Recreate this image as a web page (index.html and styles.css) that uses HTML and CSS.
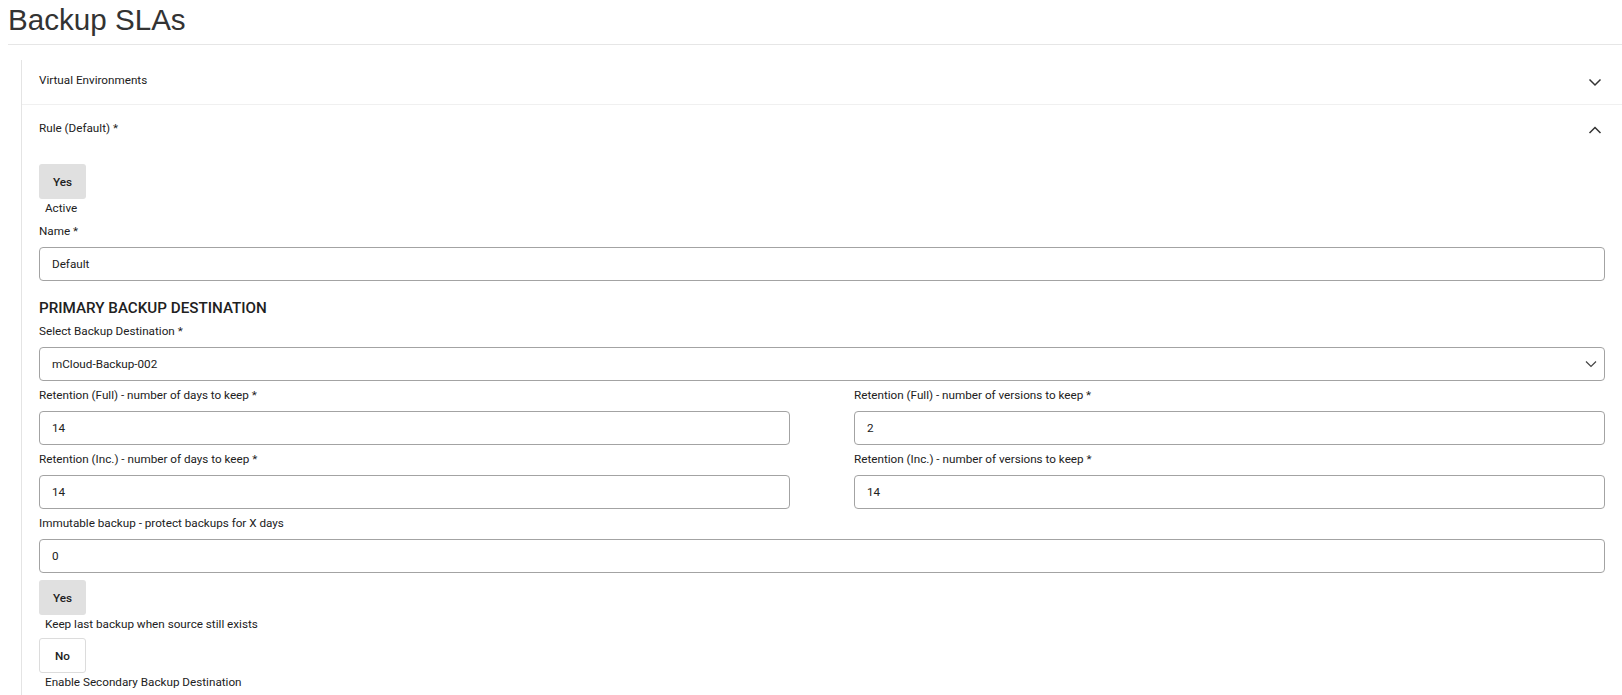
FILE: index.html
```html
<!DOCTYPE html>
<html lang="en">
<head>
<meta charset="utf-8">
<title>Backup SLAs</title>
<link rel="stylesheet" href="styles.css">
</head>
<body>
<div class="page">
  <h1 class="title">Backup SLAs</h1>
  <div class="rule-line"></div>
  <div class="accordion">
    <div class="acc-item acc-item--closed">
      <div class="acc-header">
        <span>Virtual Environments</span>
        <svg class="chev" width="14" height="12" viewBox="0 0 14 12"><path d="M1.5 3.5 L7 9 L12.5 3.5" fill="none" stroke="#333" stroke-width="1.5"/></svg>
      </div>
    </div>
    <div class="acc-item">
      <div class="acc-header">
        <span>Rule (Default) *</span>
        <svg class="chev" width="14" height="14" viewBox="0 0 14 14"><path d="M1.5 13 L7 7.5 L12.5 13" fill="none" stroke="#333" stroke-width="1.5"/></svg>
      </div>
      <div class="acc-body">
        <div class="toggle">
          <div class="tbtn tbtn--on">Yes</div>
          <div class="tlabel">Active</div>
        </div>
        <div class="field">
          <div class="flabel">Name *</div>
          <div class="input">Default</div>
        </div>
        <h2 class="section">PRIMARY BACKUP DESTINATION</h2>
        <div class="field">
          <div class="flabel">Select Backup Destination *</div>
          <div class="input select">
            <span>mCloud-Backup-002</span>
            <svg width="12" height="8" viewBox="0 0 12 8"><path d="M1 1.5 L6 6.5 L11 1.5" fill="none" stroke="#444" stroke-width="1.2"/></svg>
          </div>
        </div>
        <div class="grid2">
          <div class="field">
            <div class="flabel">Retention (Full) - number of days to keep *</div>
            <div class="input">14</div>
          </div>
          <div class="field">
            <div class="flabel">Retention (Full) - number of versions to keep *</div>
            <div class="input">2</div>
          </div>
          <div class="field">
            <div class="flabel">Retention (Inc.) - number of days to keep *</div>
            <div class="input">14</div>
          </div>
          <div class="field">
            <div class="flabel">Retention (Inc.) - number of versions to keep *</div>
            <div class="input">14</div>
          </div>
        </div>
        <div class="field">
          <div class="flabel">Immutable backup - protect backups for X days</div>
          <div class="input">0</div>
        </div>
        <div class="toggle toggle--after-field">
          <div class="tbtn tbtn--on">Yes</div>
          <div class="tlabel">Keep last backup when source still exists</div>
        </div>
        <div class="toggle">
          <div class="tbtn tbtn--off">No</div>
          <div class="tlabel">Enable Secondary Backup Destination</div>
        </div>
      </div>
    </div>
  </div>
</div>
</body>
</html>
```

FILE: styles.css
```css
html, body {
  margin: 0;
  padding: 0;
  background: #fff;
}
body {
  font-family: Roboto, "Liberation Sans", Arial, sans-serif;
  font-size: 11.7px;
  color: #212121;
}
.page {
  padding-left: 8px;
}
.title {
  margin: 0;
  padding-top: 3px;
  font-family: "Liberation Sans", Arial, sans-serif;
  font-size: 29.6px;
  line-height: 34px;
  font-weight: 400;
  color: #333;
}
.rule-line {
  margin-top: 7px;
  border-top: 1px solid #e6e6e6;
}
.accordion {
  margin-top: 15px;
  margin-left: 13px;
  border-left: 1px solid #e4e4e4;
}
.acc-item--closed {
  border-bottom: 1px solid #f0f0f0;
}
.acc-header {
  display: flex;
  align-items: center;
  justify-content: space-between;
  height: 44px;
  padding: 0 20px 0 17px;
  line-height: 18px;
}
.acc-header span {
  margin-top: 1px;
}
.acc-item--closed .acc-header span {
  margin-top: -5px;
}
.chev {
  display: block;
}
.acc-body {
  padding: 15px 17px 20px 17px;
}
.toggle {
  margin-bottom: 6px;
}
.toggle--after-field {
  margin-top: 7px;
}
.tbtn {
  width: 47px;
  height: 35px;
  box-sizing: border-box;
  border-radius: 3px;
  display: flex;
  align-items: center;
  justify-content: center;
  font-weight: 500;
  color: #212121;
}
.tbtn--on {
  background: #e0e0e0;
}
.tbtn--off {
  background: #fff;
  border: 1px solid #dcdcdc;
}
.tlabel {
  margin-top: 1px;
  padding-left: 6px;
  line-height: 16px;
}
.field {
  margin-bottom: 5px;
}
.flabel {
  line-height: 18px;
  margin-bottom: 7px;
}
.input {
  height: 34px;
  box-sizing: border-box;
  border: 1px solid #a3a3a3;
  border-radius: 4px;
  padding: 0 12px;
  display: flex;
  align-items: center;
  color: #212121;
}
.select {
  justify-content: space-between;
  padding-right: 7px;
}
.section {
  margin: 17px 0 4px 0;
  font-size: 15.2px;
  line-height: 20px;
  font-weight: 500;
  color: #212121;
}
.grid2 {
  display: grid;
  grid-template-columns: 1fr 1fr;
  column-gap: 64px;
}
```
